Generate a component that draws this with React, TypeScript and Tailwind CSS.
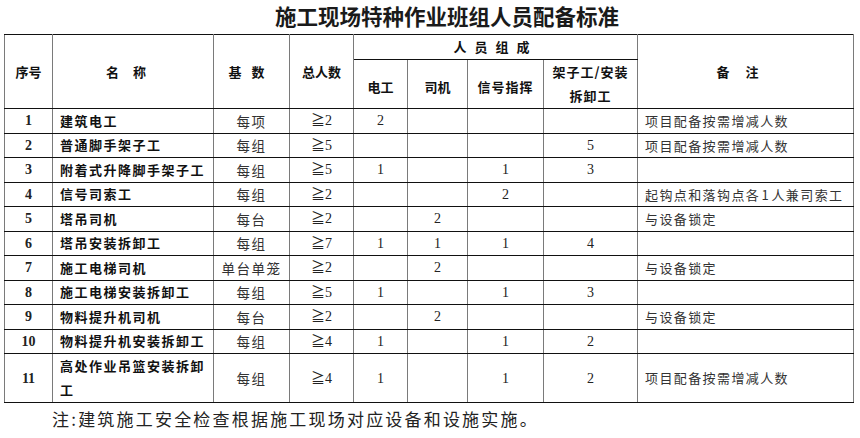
type Row = {
  no: string;
  name: React.ReactNode;
  base: string;
  total: string;
  dian: string;
  siji: string;
  xinhao: string;
  jiazi: string;
  note: string;
  tall?: boolean;
};

const rows: Row[] = [
  { no: "1", name: "建筑电工", base: "每项", total: "≧2", dian: "2", siji: "", xinhao: "", jiazi: "", note: "项目配备按需增减人数" },
  { no: "2", name: "普通脚手架子工", base: "每组", total: "≧5", dian: "", siji: "", xinhao: "", jiazi: "5", note: "项目配备按需增减人数" },
  { no: "3", name: "附着式升降脚手架子工", base: "每组", total: "≧5", dian: "1", siji: "", xinhao: "1", jiazi: "3", note: "" },
  { no: "4", name: "信号司索工", base: "每组", total: "≧2", dian: "", siji: "", xinhao: "2", jiazi: "", note: "起钩点和落钩点各 1 人兼司索工" },
  { no: "5", name: "塔吊司机", base: "每台", total: "≧2", dian: "", siji: "2", xinhao: "", jiazi: "", note: "与设备锁定" },
  { no: "6", name: "塔吊安装拆卸工", base: "每组", total: "≧7", dian: "1", siji: "1", xinhao: "1", jiazi: "4", note: "" },
  { no: "7", name: "施工电梯司机", base: "单台单笼", total: "≧2", dian: "", siji: "2", xinhao: "", jiazi: "", note: "与设备锁定" },
  { no: "8", name: "施工电梯安装拆卸工", base: "每组", total: "≧5", dian: "1", siji: "", xinhao: "1", jiazi: "3", note: "" },
  { no: "9", name: "物料提升机司机", base: "每台", total: "≧2", dian: "", siji: "2", xinhao: "", jiazi: "", note: "与设备锁定" },
  { no: "10", name: "物料提升机安装拆卸工", base: "每组", total: "≧4", dian: "1", siji: "", xinhao: "1", jiazi: "2", note: "" },
  {
    no: "11",
    name: (
      <>
        高处作业吊篮安装拆卸
        <br />工
      </>
    ),
    base: "每组",
    total: "≧4",
    dian: "1",
    siji: "",
    xinhao: "1",
    jiazi: "2",
    note: "项目配备按需增减人数",
    tall: true,
  },
];

const sans = "font-['Noto_Sans_CJK_SC',sans-serif]";
const serif = "font-['Liberation_Serif','Noto_Sans_CJK_SC',serif]";
const cell = "border-x border-x-[#7a7a7a] border-y border-y-[#111] p-0";
const head = `${cell} text-center text-[13px] font-bold text-[#111] ${sans}`;
const num = `${cell} text-center text-[14px] text-[#222] ${serif}`;

export default function App() {
  return (
    <div className="w-[860px] h-[438px] bg-white text-[#111]">
      <h1
        className={`h-[34px] pl-[34px] pt-[2px] text-center text-[21.5px] leading-[28px] font-bold text-[#1a1a1a] ${sans}`}
      >
        施工现场特种作业班组人员配备标准
      </h1>

      <table className="ml-[4px] w-[849px] table-fixed border-collapse">
        <colgroup>
          <col className="w-[48px]" />
          <col className="w-[161px]" />
          <col className="w-[76px]" />
          <col className="w-[64px]" />
          <col className="w-[54px]" />
          <col className="w-[60px]" />
          <col className="w-[76px]" />
          <col className="w-[94px]" />
          <col className="w-[216px]" />
        </colgroup>
        <thead>
          <tr className="h-[25px]">
            <th rowSpan={2} className={head}>
              序号
            </th>
            <th rowSpan={2} className={`${head} tracking-[14px]`}>
              名称
            </th>
            <th rowSpan={2} className={`${head} tracking-[10px]`}>
              基数
            </th>
            <th rowSpan={2} className={head}>
              总人数
            </th>
            <th colSpan={4} className={`${head} tracking-[8px]`}>
              人员组成
            </th>
            <th rowSpan={2} className={`${head} tracking-[16px]`}>
              备注
            </th>
          </tr>
          <tr className="h-[49px]">
            <th className={`${head} pt-[6px]`}>电工</th>
            <th className={`${head} pt-[6px]`}>司机</th>
            <th className={`${head} pt-[6px] tracking-[1px]`}>信号指挥</th>
            <th className={`${head} leading-[24px] tracking-[1px]`}>
              架子工/安装
              <br />
              拆卸工
            </th>
          </tr>
        </thead>
        <tbody>
          {rows.map((r) => (
            <tr key={r.no} className={r.tall ? "h-[48px]" : "h-[24.5px]"}>
              <td className={`${num} font-bold text-[#111]`}>{r.no}</td>
              <td
                className={`${cell} pl-[7px] text-left text-[13px] font-bold tracking-[1.5px] text-[#111] ${sans} ${r.tall ? "leading-[24px]" : "leading-[20px]"}`}
              >
                {r.name}
              </td>
              <td className={`${cell} text-center text-[13.5px] tracking-[1.5px] text-[#333] ${sans}`}>
                {r.base}
              </td>
              <td className={num}>{r.total}</td>
              <td className={num}>{r.dian}</td>
              <td className={num}>{r.siji}</td>
              <td className={num}>{r.xinhao}</td>
              <td className={num}>{r.jiazi}</td>
              <td
                className={`${cell} pl-[7px] text-left text-[13px] tracking-[1.4px] text-[#333] [word-spacing:-3px] ${sans}`}
              >
                {r.note}
              </td>
            </tr>
          ))}
        </tbody>
      </table>

      <p className={`pl-[52px] pt-[3px] text-[17px] leading-[26px] tracking-[2.2px] text-[#222] ${sans}`}>
        注:建筑施工安全检查根据施工现场对应设备和设施实施。
      </p>
    </div>
  );
}
